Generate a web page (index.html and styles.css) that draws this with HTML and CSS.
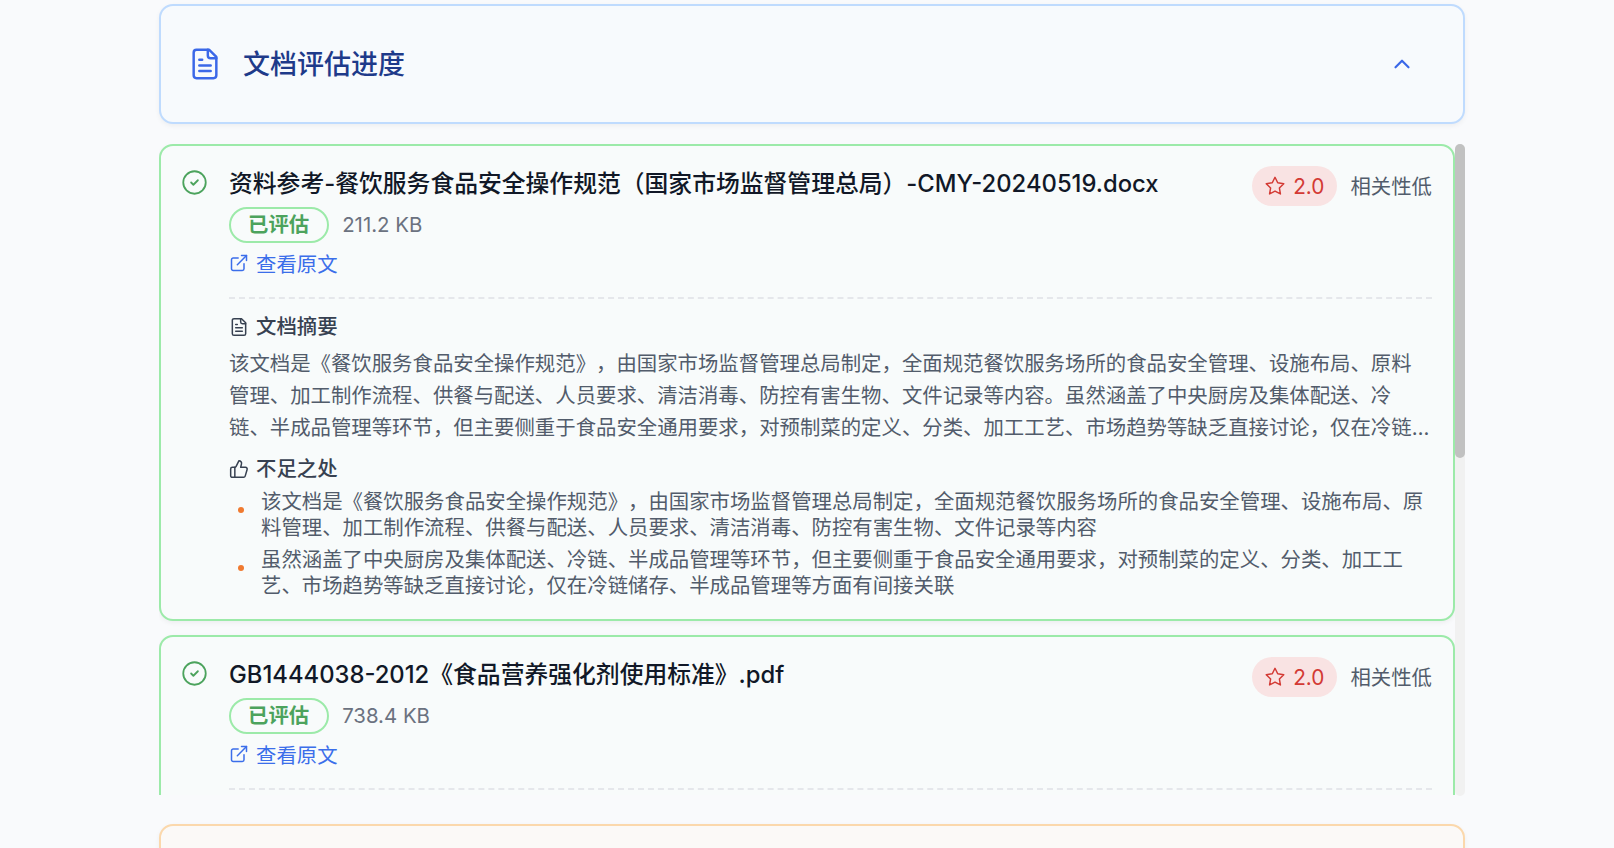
FILE: index.html
```html
<!DOCTYPE html>
<html lang="zh-CN">
<head>
<meta charset="utf-8">
<title>文档评估进度</title>
<link rel="stylesheet" href="styles.css">
</head>
<body>
<main class="page">
  <section class="panel panel-blue">
    <div class="panel-title">
      <svg class="icon-doc" viewBox="0 0 24 24"><path d="M15 2H6a2 2 0 0 0-2 2v16a2 2 0 0 0 2 2h12a2 2 0 0 0 2-2V7Z"/><path d="M14 2v4a2 2 0 0 0 2 2h4"/><path d="M16 13H8"/><path d="M16 17H8"/><path d="M10 9H8"/></svg>
      <h2>文档评估进度</h2>
    </div>
    <svg class="icon-chevron" viewBox="0 0 24 24"><path d="m18 15-6-6-6 6"/></svg>
  </section>

  <div class="list-wrap">
    <div class="doc-list">
      <article class="card">
        <svg class="icon-check" viewBox="0 0 24 24"><circle cx="12" cy="12" r="10"/><path d="m9 12 2 2 4-4"/></svg>
        <div class="card-body">
          <div class="card-head">
            <div class="card-info">
              <h3>资料参考-餐饮服务食品安全操作规范（国家市场监督管理总局）-CMY-20240519.docx</h3>
              <div class="meta"><span class="status">已评估</span><span class="size">211.2 KB</span></div>
              <a class="source"><svg class="icon-sm" viewBox="0 0 24 24"><path d="M15 3h6v6"/><path d="M10 14 21 3"/><path d="M18 13v6a2 2 0 0 1-2 2H5a2 2 0 0 1-2-2V8a2 2 0 0 1 2-2h6"/></svg>查看原文</a>
            </div>
            <div class="score-wrap">
              <span class="score"><svg class="icon-star" viewBox="0 0 24 24"><path d="M12 2.5l2.95 5.98 6.6.96-4.78 4.65 1.13 6.57L12 17.56l-5.9 3.1 1.13-6.57-4.78-4.65 6.6-.96z"/></svg>2.0</span>
              <span class="relevance">相关性低</span>
            </div>
          </div>
          <div class="details">
            <h4><svg class="icon-sm" viewBox="0 0 24 24"><path d="M15 2H6a2 2 0 0 0-2 2v16a2 2 0 0 0 2 2h12a2 2 0 0 0 2-2V7Z"/><path d="M14 2v4a2 2 0 0 0 2 2h4"/><path d="M16 13H8"/><path d="M16 17H8"/><path d="M10 9H8"/></svg>文档摘要</h4>
            <p class="summary">该文档是《餐饮服务食品安全操作规范》，由国家市场监督管理总局制定，全面规范餐饮服务场所的食品安全管理、设施布局、原料管理、加工制作流程、供餐与配送、人员要求、清洁消毒、防控有害生物、文件记录等内容。虽然涵盖了中央厨房及集体配送、冷链、半成品管理等环节，但主要侧重于食品安全通用要求，对预制菜的定义、分类、加工工艺、市场趋势等缺乏直接讨论，仅在冷链储存、半成品管理等方面有间接关联。</p>
            <h4 class="h-gap"><svg class="icon-sm icon-thumb" viewBox="0 0 24 24"><path d="M7 10v12"/><path d="M15 5.88 14 10h5.83a2 2 0 0 1 1.92 2.56l-2.33 8A2 2 0 0 1 17.5 22H4a2 2 0 0 1-2-2v-8a2 2 0 0 1 2-2h2.76a2 2 0 0 0 1.79-1.11L12 2a3.13 3.13 0 0 1 3 3.88Z"/></svg>不足之处</h4>
            <ul class="points">
              <li>该文档是《餐饮服务食品安全操作规范》，由国家市场监督管理总局制定，全面规范餐饮服务场所的食品安全管理、设施布局、原料管理、加工制作流程、供餐与配送、人员要求、清洁消毒、防控有害生物、文件记录等内容</li>
              <li>虽然涵盖了中央厨房及集体配送、冷链、半成品管理等环节，但主要侧重于食品安全通用要求，对预制菜的定义、分类、加工工艺、市场趋势等缺乏直接讨论，仅在冷链储存、半成品管理等方面有间接关联</li>
            </ul>
          </div>
        </div>
      </article>

      <article class="card">
        <svg class="icon-check" viewBox="0 0 24 24"><circle cx="12" cy="12" r="10"/><path d="m9 12 2 2 4-4"/></svg>
        <div class="card-body">
          <div class="card-head">
            <div class="card-info">
              <h3>GB1444038-2012《食品营养强化剂使用标准》.pdf</h3>
              <div class="meta"><span class="status">已评估</span><span class="size">738.4 KB</span></div>
              <a class="source"><svg class="icon-sm" viewBox="0 0 24 24"><path d="M15 3h6v6"/><path d="M10 14 21 3"/><path d="M18 13v6a2 2 0 0 1-2 2H5a2 2 0 0 1-2-2V8a2 2 0 0 1 2-2h6"/></svg>查看原文</a>
            </div>
            <div class="score-wrap">
              <span class="score"><svg class="icon-star" viewBox="0 0 24 24"><path d="M12 2.5l2.95 5.98 6.6.96-4.78 4.65 1.13 6.57L12 17.56l-5.9 3.1 1.13-6.57-4.78-4.65 6.6-.96z"/></svg>2.0</span>
              <span class="relevance">相关性低</span>
            </div>
          </div>
          <div class="details"></div>
        </div>
      </article>
    </div>
    <div class="scroll-track"><div class="scroll-thumb"></div></div>
  </div>

  <section class="panel panel-orange"></section>
</main>
</body>
</html>
```
FILE: styles.css
```css
* { box-sizing: border-box; }
html, body { margin: 0; height: 100%; overflow: hidden; }
body {
  background: #f9fafc;
  color: #111827;
  font-family: Inter, "Noto Sans CJK SC", sans-serif;
  text-spacing-trim: space-all;
}
svg { fill: none; stroke: currentColor; stroke-linecap: round; stroke-linejoin: round; flex: none; }
h2, h3, h4, p, ul { margin: 0; padding: 0; }

.page { width: 1306px; margin-left: 159px; padding-top: 4px; }

.panel {
  height: 120px;
  border: 2px solid #bfdbfe;
  border-radius: 14px;
  background: #f7fafd;
  box-shadow: 0 2px 5px rgba(0, 0, 0, .05);
  display: flex;
  align-items: center;
  justify-content: space-between;
  padding: 0 48px 0 27px;
}
.panel-orange { margin-top: 28px; border-color: #fbd8ac; background: #fbf9f7; }
.panel-title { display: flex; align-items: center; gap: 21px; color: #1e3a8a; }
.panel-title h2 { font-size: 27px; font-weight: 500; line-height: 36px; padding-top: 1px; }
.icon-doc { width: 34px; height: 34px; stroke-width: 1.75; color: #3b68e8; }
.icon-chevron { width: 26px; height: 26px; stroke-width: 2; color: #3b68e8; }

.list-wrap { display: flex; height: 652px; margin-top: 20px; }
.doc-list {
  flex: 1;
  min-width: 0;
  height: 651px;
  overflow: hidden;
  display: flex;
  flex-direction: column;
  gap: 14px;
}
.scroll-track { flex: none; width: 10px; background: #f1f1f1; border-radius: 5px; }
.scroll-thumb { height: 314px; background: #c1c1c1; border-radius: 5px; }

.card {
  flex: none;
  display: flex;
  gap: 22px;
  padding: 20px 21px 20px 20px;
  border: 2px solid #9ceaa9;
  border-radius: 14px;
  background: #f8fbfb;
  box-shadow: 0 2px 5px rgba(0, 0, 0, .05);
}
.icon-check { width: 27px; height: 27px; stroke-width: 1.6; color: #4ca35d; margin-top: 3px; margin-right: -1px; }
.card-body { flex: 1; min-width: 0; }
.card-head { display: flex; justify-content: space-between; align-items: flex-start; }
.card-info h3 { font-size: 23.8px; font-weight: 500; line-height: 34px; padding-top: 1px; }
.meta { display: flex; align-items: center; gap: 13px; margin-top: 6px; }
.status {
  height: 36px;
  padding: 0 18px 0 17px;
  border: 2px solid #9ceaa9;
  border-radius: 18px;
  color: #4ca35d;
  font-size: 20.4px;
  font-weight: 600;
  line-height: 32px;
}
.size { color: #6b7280; font-size: 20.4px; margin-top: -1px; }
.source { display: flex; align-items: center; gap: 7px; margin-top: 6px; height: 28px; color: #3b6eea; font-size: 20.4px; }
.icon-sm { width: 20px; height: 20px; stroke-width: 1.8; }

.score-wrap { display: flex; align-items: center; gap: 13px; flex: none; }
.score {
  display: flex;
  align-items: center;
  gap: 7px;
  height: 40px;
  padding: 0 13px 0 12px;
  border-radius: 20px;
  background: #f9e3e3;
  color: #d33a34;
  font-size: 20.8px;
}
.icon-star { width: 22px; height: 22px; stroke-width: 1.6; }
.relevance { color: #525c6b; font-size: 20.4px; margin-top: -3px; }

.details { margin-top: 20px; border-top: 2px dashed #e5e7eb; padding-top: 14px; }
.details h4 { display: flex; align-items: center; gap: 7px; color: #374151; font-size: 20.4px; font-weight: 500; line-height: 28px; }
.details h4.h-gap { margin-top: 11px; }
.summary {
  margin-top: 7px;
  color: #525c6b;
  font-size: 20.4px;
  line-height: 32px;
  display: -webkit-box;
  -webkit-box-orient: vertical;
  -webkit-line-clamp: 3;
  overflow: hidden;
}
.points { list-style: none; margin-top: 6px; display: flex; flex-direction: column; gap: 6px; }
.points li { position: relative; padding-left: 32px; color: #525c6b; font-size: 20.4px; line-height: 26px; }
.points li::before {
  content: "";
  position: absolute;
  left: 9px;
  top: 18px;
  width: 6px;
  height: 6px;
  border-radius: 50%;
  background: #f07a30;
}
```
